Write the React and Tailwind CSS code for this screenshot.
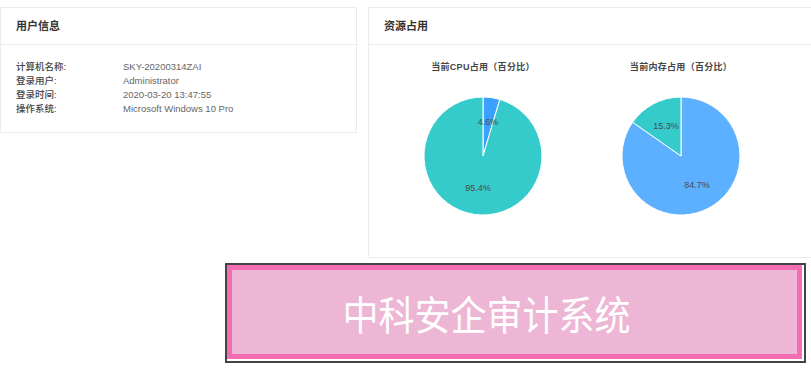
// App.jsx

const font = {
  fontFamily: '"Liberation Sans", "Noto Sans CJK SC", sans-serif',
};

const userInfo = [
  ["计算机名称:", "SKY-20200314ZAI"],
  ["登录用户:", "Administrator"],
  ["登录时间:", "2020-03-20 13:47:55"],
  ["操作系统:", "Microsoft Windows 10 Pro"],
];

export default function App() {
  return (
    <div
      className="relative w-[811px] h-[374px] overflow-hidden bg-white"
      style={font}
    >
      <div className="flex items-start gap-[11px] pt-[7px]">
        {/* 用户信息 */}
        <div className="w-[357px] shrink-0 border border-[#ececec] bg-white">
          <div className="h-[37px] flex items-center px-[15px] border-b border-[#ececec]">
            <h2 className="text-[11px] font-bold text-[#333]">用户信息</h2>
          </div>
          <div className="px-[15px] pt-[15px] pb-[16px]">
            {userInfo.map(([label, value]) => (
              <div key={label} className="flex h-[14px] items-center text-[9.5px]">
                <span className="w-[107px] font-medium text-[#444]">{label}</span>
                <span className="text-[#666]">{value}</span>
              </div>
            ))}
          </div>
        </div>

        {/* 资源占用 */}
        <div className="w-[470px] shrink-0 border border-[#ececec] bg-white">
          <div className="h-[37px] flex items-center px-[15px] border-b border-[#ececec]">
            <h2 className="text-[11px] font-bold text-[#333]">资源占用</h2>
          </div>
          <div className="flex pl-[15px] pt-[17px] pb-[42px]">
            <PieBlock
              title="当前CPU占用（百分比）"
              slices={[
                { color: "#3ba0ff", d: "M59,59 L59,0 A59,59 0 0 1 75.82,2.45 Z" },
                { color: "#36cbcb", d: "M59,59 L75.82,2.45 A59,59 0 1 1 59,0 Z" },
              ]}
              labels={[
                { x: 64, y: 26, t: "4.6%" },
                { x: 54, y: 92, t: "95.4%" },
              ]}
            />
            <PieBlock
              title="当前内存占用（百分比）"
              slices={[
                { color: "#5cb0ff", d: "M59,59 L59,0 A59,59 0 1 1 10.62,25.23 Z" },
                { color: "#36cbcb", d: "M59,59 L10.62,25.23 A59,59 0 0 1 59,0 Z" },
              ]}
              labels={[
                { x: 44, y: 30, t: "15.3%" },
                { x: 75, y: 89, t: "84.7%" },
              ]}
            />
          </div>
        </div>
      </div>

      {/* 水印横幅 */}
      <div className="absolute left-[225px] top-[263px] w-[581px] h-[100px] border-2 border-[#444] bg-white">
        <div className="mr-[2px] h-[94px] border-[5px] border-[#f26db2] bg-[#edb6d4] flex items-center justify-center pr-[56px]">
          <span
            className="text-[36px] leading-none text-white scale-y-110"
            style={{ fontFamily: '"Noto Sans CJK SC", sans-serif' }}
          >
            中科安企审计系统
          </span>
        </div>
      </div>
    </div>
  );
}

function PieBlock({ title, slices, labels }) {
  return (
    <div className="w-[198px] flex flex-col items-center">
      <p className="text-[9px] leading-[10px] font-bold text-[#464646] tracking-[0.3px]">{title}</p>
      <svg width="118" height="118" viewBox="0 0 118 118" className="mt-[25px]">
        {slices.map((s, i) => (
          <path key={i} d={s.d} fill={s.color} stroke="#fff" strokeWidth="1" />
        ))}
        {labels.map((l) => (
          <text
            key={l.t}
            x={l.x}
            y={l.y}
            textAnchor="middle"
            dominantBaseline="middle"
            fontSize="9"
            fill="#4a4a4a"
            fontFamily='"Liberation Sans", sans-serif'
          >
            {l.t}
          </text>
        ))}
      </svg>
    </div>
  );
}
